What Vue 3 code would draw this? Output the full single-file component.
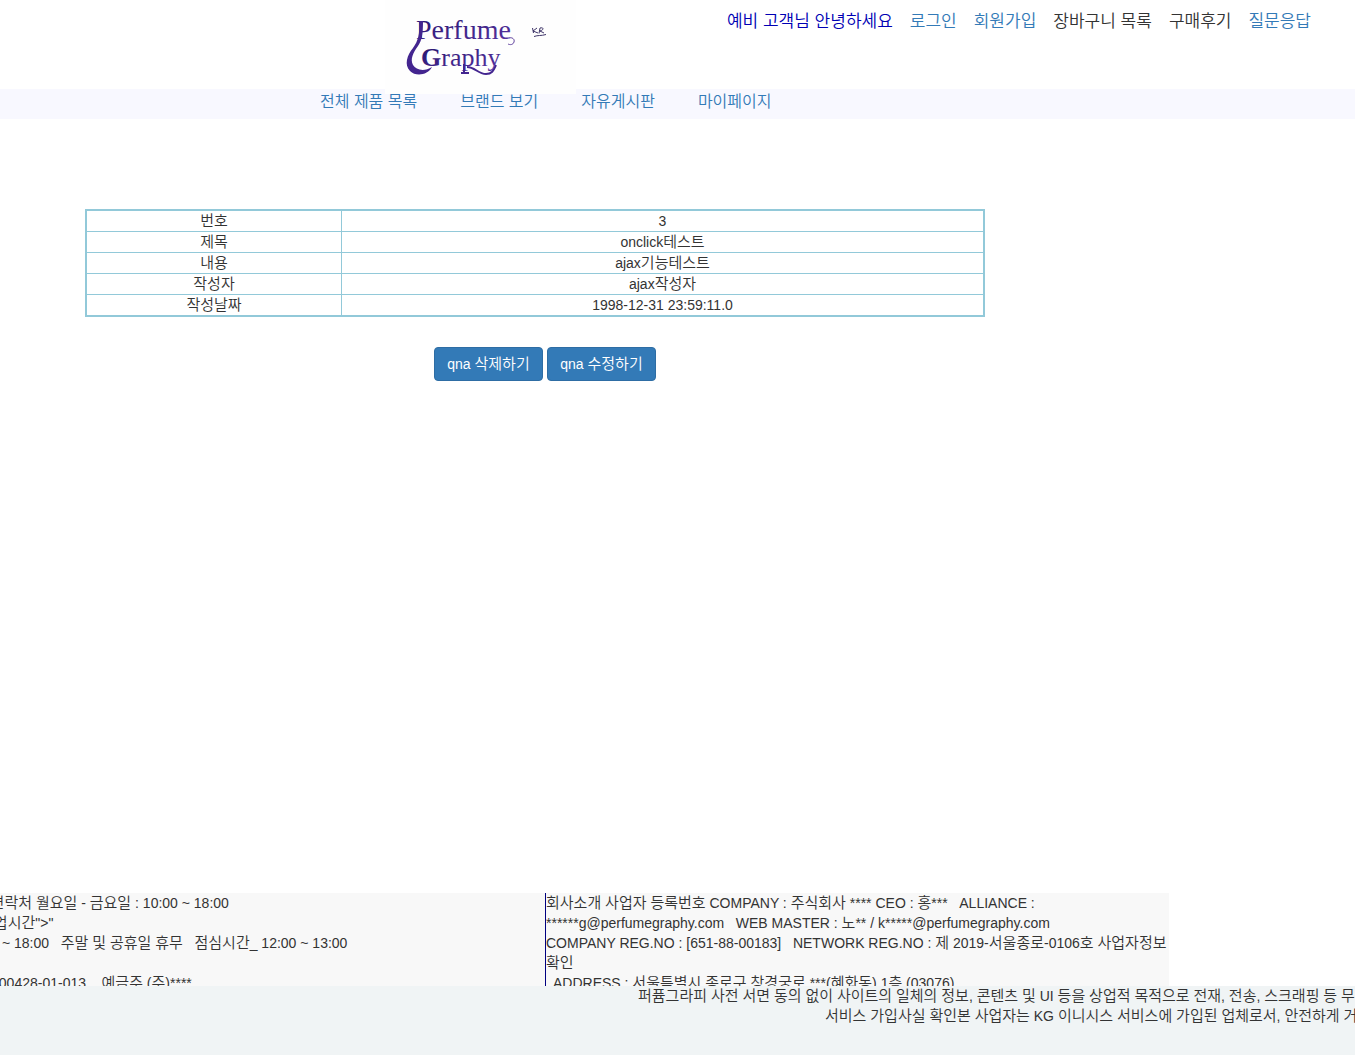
<script setup>
import { h } from 'vue'

// Hangul runs are set one step larger than the Latin text around them.
const MixedText = (props) =>
  props.text
    .split(/([가-힣]+)/)
    .filter(Boolean)
    .map((part) => (/[가-힣]/.test(part) ? h('span', { class: 'hangul' }, part) : part))
MixedText.props = ['text']

const userLinks = [
  { text: '로그인' },
  { text: '회원가입' },
  { text: '장바구니 목록', dark: true },
  { text: '구매후기', dark: true },
  { text: '질문응답' },
]
const menu = ['전체 제품 목록', '브랜드 보기', '자유게시판', '마이페이지']
const rows = [
  ['번호', '3'],
  ['제목', 'onclick테스트'],
  ['내용', 'ajax기능테스트'],
  ['작성자', 'ajax작성자'],
  ['작성날짜', '1998-12-31 23:59:11.0'],
]
const contact = [
  '문의연락처 월요일 - 금요일 : 10:00 ~ 18:00',
  't="영업시간">"',
  '10:00 ~ 18:00\u00a0\u00a0 주말 및 공휴일 휴무\u00a0\u00a0 점심시간_ 12:00 ~ 13:00',
  '\u00a0',
  '065-100428-01-013\u00a0\u00a0\u00a0 예금주 (주)****',
]
const company = [
  '회사소개 사업자 등록번호 COMPANY : 주식회사 **** CEO : 홍***\u00a0\u00a0 ALLIANCE :',
  '******g@perfumegraphy.com\u00a0\u00a0 WEB MASTER : 노** / k*****@perfumegraphy.com',
  'COMPANY REG.NO : [651-88-00183]\u00a0\u00a0 NETWORK REG.NO : 제 2019-서울종로-0106호 사업자정보',
  '확인',
  '\u00a0 ADDRESS : 서울특별시 종로구 창경궁로 ***(혜화동) 1층 (03076)',
]
const notice = [
  '퍼퓸그라피 사전 서면 동의 없이 사이트의 일체의 정보, 콘텐츠 및 UI 등을 상업적 목적으로 전재, 전송, 스크래핑 등 무단',
  '서비스 가입사실 확인본 사업자는 KG 이니시스 서비스에 가입된 업체로서, 안전하게 거래',
]
</script>

<template>
  <div class="page">
    <header class="header">
      <a href="#" class="logo" aria-label="Perfume Graphy KR">
        <svg width="191" height="94" viewBox="385 0 191 94">
          <defs>
            <linearGradient id="ink" x1="0" y1="0" x2="1" y2="1">
              <stop offset="0" stop-color="#24146b" />
              <stop offset="1" stop-color="#5a35a5" />
            </linearGradient>
          </defs>
          <g fill="url(#ink)" font-family="'Liberation Serif', serif">
            <text x="416" y="39" font-size="28">Perfume</text>
            <text x="421" y="66" font-size="26"><tspan font-weight="700">G</tspan>raphy</text>
          </g>
          <path d="M419 21 H423 C423 34 422 40 418 46 C413 53 410 59 413 65 C416 70 424 72 432 67 C428 75 416 77 410 71 C404 65 407 55 413 48 C418 41 420 34 419 21 Z" fill="#43258f" />
          <path d="M509 38 C512 37 515 39 514 42 C513 45 510 45 508 44" fill="none" stroke="#62449f" stroke-width="1" />
          <path d="M464 64 V72 M461 73 H469" fill="none" stroke="#43258f" stroke-width="2" />
          <path d="M467 67 C475 67 478 74 486 74 C493 74 494 69 496 65" fill="none" stroke="#43258f" stroke-width="2" />
          <g fill="none" stroke="#3e3468" stroke-width="1">
            <path d="M532.500 28 L533.500 33 M537 28 L533 31 L538 33" />
            <path d="M539 33.500 L540 28 C544 27 544 30 540 31 L544 33" />
            <path d="M534 36.500 C538 35 541 36 546 34.500" />
          </g>
        </svg>
      </a>
      <div class="user">
        <span class="greeting">예비 고객님 안녕하세요</span>
        <a v-for="l in userLinks" :key="l.text" href="#" :class="{ dark: l.dark }">{{ l.text }}</a>
      </div>
    </header>
    <nav class="menu">
      <a v-for="m in menu" :key="m" href="#">{{ m }}</a>
    </nav>
    <main class="content">
      <table class="detail">
        <tbody>
          <tr v-for="[label, value] in rows" :key="label">
            <th scope="row"><MixedText :text="label" /></th>
            <td><MixedText :text="value" /></td>
          </tr>
        </tbody>
      </table>
      <div class="actions">
        <button type="button"><MixedText text="qna 삭제하기" /></button>
        <button type="button"><MixedText text="qna 수정하기" /></button>
      </div>
    </main>
    <footer>
      <div class="info">
        <div class="contact">
          <p v-for="line in contact" :key="line"><MixedText :text="line" /></p>
        </div>
        <div class="company">
          <p v-for="line in company" :key="line"><MixedText :text="line" /></p>
        </div>
      </div>
      <div class="notice">
        <p v-for="line in notice" :key="line"><MixedText :text="line" /></p>
      </div>
    </footer>
  </div>
</template>

<style>
body {
  margin: 0;
  background: #fff;
}
</style>

<style scoped>
.page {
  display: flex;
  flex-direction: column;
  min-height: 100vh;
  overflow: hidden;
  color: #333;
  font: 14px/20px "Liberation Sans", "Noto Sans CJK KR", sans-serif;
}
a {
  color: #337ab7;
  text-decoration: none;
}
p {
  margin: 0;
  white-space: nowrap;
}
:deep(.hangul) {
  font-size: 15px;
  font-weight: 350;
  line-height: 0;
}
.header {
  display: flex;
  justify-content: space-between;
  height: 89px;
  padding: 0 44px 0 385px;
}
.logo {
  position: relative;
  z-index: 1;
  height: 94px;
  background: #fefefe;
}
.logo svg {
  display: block;
}
.user {
  display: flex;
  gap: 17px;
  padding-top: 12px;
  font-size: 17px;
  font-weight: 350;
  white-space: nowrap;
}
.greeting {
  color: #0000b4;
}
.user .dark {
  color: #333;
}
.menu {
  box-sizing: border-box;
  display: flex;
  gap: 43px;
  height: 30px;
  padding: 3px 0 0 320px;
  background: #f8f8ff;
  font-size: 16px;
  font-weight: 350;
}
.content {
  flex: 1;
  max-width: 1090px;
  padding-top: 90px;
}
.detail {
  width: 900px;
  margin-left: 85px;
  border: 2px solid #92c9d9;
  border-collapse: collapse;
  table-layout: fixed;
  text-align: center;
}
.detail th,
.detail td {
  height: 20px;
  padding: 0;
  border: 1px solid #92c9d9;
  font-weight: 400;
}
.detail th {
  width: 254px;
}
.actions {
  display: flex;
  justify-content: center;
  gap: 4px;
  margin-top: 30px;
}
.actions button {
  min-width: 109px;
  height: 34px;
  padding: 0 12px;
  border: 1px solid #2e6da4;
  border-radius: 4px;
  background: #337ab7;
  color: #fff;
  font: inherit;
}
.info {
  display: flex;
  height: 93px;
  overflow: hidden;
}
.contact {
  box-sizing: border-box;
  width: 582px;
  margin-left: -37px;
  background: #f8f8f8;
}
.company {
  width: 623px;
  border-left: 1px solid #000080;
  background: #f8f8f8;
}
.notice {
  height: 69px;
  padding-left: 638px;
  background: #f0f4f5;
}
.notice p + p {
  padding-left: 187px;
}
</style>
